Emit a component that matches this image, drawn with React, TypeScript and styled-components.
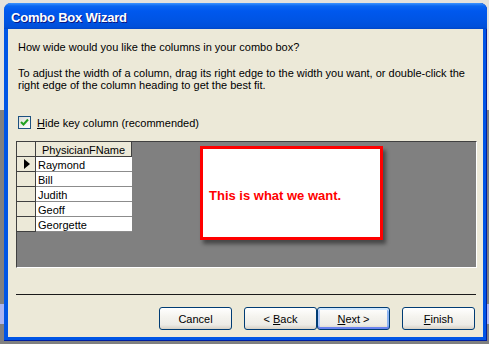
import styled, { createGlobalStyle } from 'styled-components'

const face = '#ECE9D8'
const xpBlue = '#0055E5'

const GlobalStyle = createGlobalStyle`
  html, body {
    margin: 0;
    padding: 0;
  }
  body {
    background: linear-gradient(to bottom, #e4e2dc 0px, #e4e2dc 110px, #808080 110px, #808080 304px, #aab4f0 304px, #aab4f0 324px, #808080 324px);
    font-family: "Liberation Sans", Arial, sans-serif;
    font-size: 11px;
    color: #000;
  }
`

const rows = ['Raymond', 'Bill', 'Judith', 'Geoff', 'Georgette']

function App() {
  return (
    <Screen>
      <GlobalStyle />
      <Window>
        <TitleBar>
          <Title>Combo Box Wizard</Title>
        </TitleBar>
        <Body>
          <Question>How wide would you like the columns in your combo box?</Question>
          <Hint>
            To adjust the width of a column, drag its right edge to the width you want, or double-click the<br />
            right edge of the column heading to get the best fit.
          </Hint>
          <CheckRow>
            <CheckBox>
              <svg width="9" height="9" viewBox="0 0 9 9">
                <path d="M1 4 L3.5 6.5 L8 1.5" stroke="#21A121" strokeWidth="2" fill="none" />
              </svg>
            </CheckBox>
            <span><u>H</u>ide key column (recommended)</span>
          </CheckRow>
          <GridArea>
            <Sheet>
              <HeadCell />
              <HeadCell $center>PhysicianFName</HeadCell>
              {rows.map((name, i) => (
                <Row key={name}>
                  <Selector>{i === 0 && <Arrow />}</Selector>
                  <DataCell>{name}</DataCell>
                </Row>
              ))}
            </Sheet>
            <Callout>This is what we want.</Callout>
          </GridArea>
          <Separator />
          <ButtonRow>
            <Button>Cancel</Button>
            <ButtonPair>
              <Button>&lt; <u>B</u>ack</Button>
              <Button $default><u>N</u>ext &gt;</Button>
            </ButtonPair>
            <Button><u>F</u>inish</Button>
          </ButtonRow>
        </Body>
      </Window>
    </Screen>
  )
}

const Screen = styled.div`
  width: 489px;
  height: 344px;
  box-sizing: border-box;
  padding: 3px 2px 3px 4px;
  overflow: hidden;
`
const Window = styled.div`
  width: 483px;
  height: 338px;
  box-sizing: border-box;
  display: flex;
  flex-direction: column;
  background: ${xpBlue};
  border-radius: 7px 7px 0 0;
  padding: 0 4px 4px 4px;
  box-shadow: inset 0 -1px 0 #001ea0, inset -1px 0 0 #001ea0;
`
const TitleBar = styled.div`
  height: 26px;
  margin: 0 -4px;
  padding-left: 7px;
  display: flex;
  align-items: center;
  border-radius: 7px 7px 0 0;
  background: linear-gradient(to bottom, #3d95ff 0px, #0a66f0 3px, #0058ee 8px, #0054e3 18px, #0050da 24px, #0046c8 26px);
`
const Title = styled.div`
  font-family: "Liberation Sans", Arial, sans-serif;
  font-weight: bold;
  font-size: 13px;
  letter-spacing: -0.2px;
  color: #fff;
  text-shadow: 1px 1px 0 #0a1883;
  padding-top: 2px;
`
const Body = styled.div`
  flex: 1;
  background: ${face};
  padding: 12px 6px 7px 8px;
  display: flex;
  flex-direction: column;
`
const Question = styled.div`
  line-height: 12px;
  margin-left: 2px;
`
const Hint = styled.div`
  line-height: 12px;
  margin: 14px 0 0 2px;
  white-space: nowrap;
`
const CheckRow = styled.label`
  display: flex;
  align-items: center;
  gap: 6px;
  margin: 25px 0 0 2px;
  height: 13px;
`
const CheckBox = styled.span`
  width: 13px;
  height: 13px;
  box-sizing: border-box;
  border: 1px solid #1c5180;
  background: linear-gradient(135deg, #dcdcd7, #fff);
  display: flex;
  align-items: center;
  justify-content: center;
`
const GridArea = styled.div`
  position: relative;
  margin-top: 12px;
  height: 127px;
  box-sizing: border-box;
  background: #808080;
  border: 1px solid;
  border-color: #404040 #fff #fff #404040;
`
const Sheet = styled.div`
  display: grid;
  grid-template-columns: 19px 96px;
  width: 115px;
`
const Row = styled.div`
  display: contents;
`
const HeadCell = styled.div<{ $center?: boolean }>`
  height: 15px;
  box-sizing: border-box;
  background: ${face};
  border-right: 1px solid #404040;
  border-bottom: 1px solid #404040;
  padding-top: 1px;
  line-height: 14px;
  text-align: ${p => (p.$center ? 'center' : 'left')};
`
const Selector = styled.div`
  height: 15px;
  box-sizing: border-box;
  background: ${face};
  border-right: 1px solid #404040;
  border-bottom: 1px solid #404040;
  display: flex;
  align-items: center;
  padding-left: 7px;
`
const Arrow = styled.span`
  width: 0;
  height: 0;
  border-top: 5px solid transparent;
  border-bottom: 5px solid transparent;
  border-left: 6px solid #000;
`
const DataCell = styled.div`
  height: 15px;
  box-sizing: border-box;
  background: #fff;
  border-bottom: 1px solid #8c8c8c;
  padding: 2px 0 0 2px;
  line-height: 13px;
  overflow: hidden;
`
const Callout = styled.div`
  position: absolute;
  left: 183px;
  top: 4px;
  width: 183px;
  height: 94px;
  box-sizing: border-box;
  background: #fff;
  border: 3px solid #ff0000;
  box-shadow: 3px 4px 4px rgba(0, 0, 0, 0.45);
  display: flex;
  align-items: center;
  padding: 4px 0 0 6px;
  font-family: "Liberation Sans", Arial, sans-serif;
  font-weight: bold;
  font-size: 13px;
  color: #ff0000;
`
const Separator = styled.div`
  margin-top: 26px;
  height: 1px;
  margin-right: 1px;
  background: #1a1a1a;
`
const ButtonRow = styled.div`
  margin-top: 12px;
  margin-right: 2px;
  display: flex;
  justify-content: flex-end;
  gap: 12px;
`
const ButtonPair = styled.div`
  display: flex;
`
const Button = styled.button<{ $default?: boolean }>`
  width: 73px;
  height: 23px;
  padding: 0;
  font-family: "Liberation Sans", Arial, sans-serif;
  font-size: 11px;
  color: #000;
  border: 1px solid #003c74;
  border-radius: 3px;
  background: linear-gradient(to bottom, #fff 0%, #f5f4ef 40%, #ecebe6 80%, #d6d0c5 100%);
  box-shadow: ${p =>
    p.$default
      ? 'inset 0 2px 0 #cee7ff, inset 0 -2px 0 #6982ee, inset 2px 0 0 #b2ccfa, inset -2px 0 0 #8cb4f2'
      : 'none'};
`

export default App
